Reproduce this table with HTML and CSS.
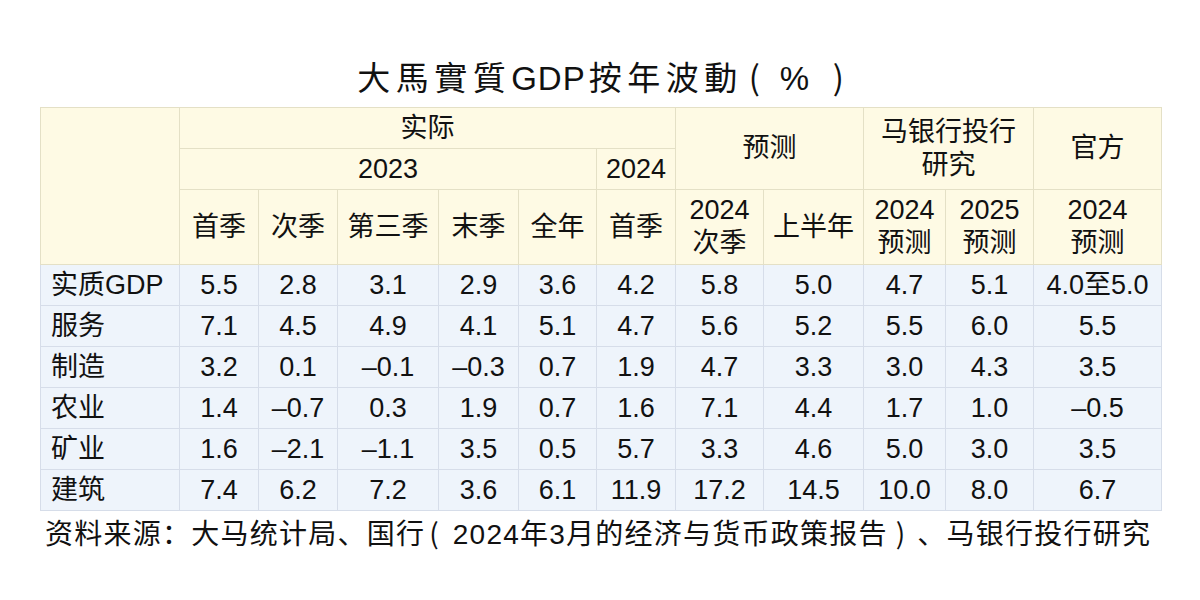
FILE: index.html
```html
<!DOCTYPE html>
<html lang="zh">
<head>
<meta charset="utf-8">
<link rel="stylesheet" href="styles.css">
</head>
<body>
<div class="page">
  <h1 class="title">大馬實質<span class="latin">GDP</span>按年波動<span class="tlp">(</span>%<span class="trp">)</span></h1>
  <table class="gdp">
    <colgroup>
      <col style="width:139px"><col style="width:79px"><col style="width:79px"><col style="width:101px">
      <col style="width:80px"><col style="width:78px"><col style="width:79px"><col style="width:88px">
      <col style="width:100px"><col style="width:82px"><col style="width:88px"><col style="width:128px">
    </colgroup>
    <thead>
      <tr class="h1">
        <th rowspan="3"></th>
        <th colspan="6">实际</th>
        <th colspan="2" rowspan="2">预测</th>
        <th colspan="2" rowspan="2">马银行投行<br>研究</th>
        <th rowspan="2">官方</th>
      </tr>
      <tr class="h2">
        <th colspan="5">2023</th>
        <th>2024</th>
      </tr>
      <tr class="h3">
        <th>首季</th><th>次季</th><th>第三季</th><th>末季</th><th>全年</th><th>首季</th>
        <th>2024<br>次季</th><th>上半年</th>
        <th>2024<br>预测</th><th>2025<br>预测</th><th>2024<br>预测</th>
      </tr>
    </thead>
    <tbody>
      <tr><td class="lbl">实质GDP</td><td>5.5</td><td>2.8</td><td>3.1</td><td>2.9</td><td>3.6</td><td>4.2</td><td>5.8</td><td>5.0</td><td>4.7</td><td>5.1</td><td>4.0至5.0</td></tr>
      <tr><td class="lbl">服务</td><td>7.1</td><td>4.5</td><td>4.9</td><td>4.1</td><td>5.1</td><td>4.7</td><td>5.6</td><td>5.2</td><td>5.5</td><td>6.0</td><td>5.5</td></tr>
      <tr><td class="lbl">制造</td><td>3.2</td><td>0.1</td><td>–0.1</td><td>–0.3</td><td>0.7</td><td>1.9</td><td>4.7</td><td>3.3</td><td>3.0</td><td>4.3</td><td>3.5</td></tr>
      <tr><td class="lbl">农业</td><td>1.4</td><td>–0.7</td><td>0.3</td><td>1.9</td><td>0.7</td><td>1.6</td><td>7.1</td><td>4.4</td><td>1.7</td><td>1.0</td><td>–0.5</td></tr>
      <tr><td class="lbl">矿业</td><td>1.6</td><td>–2.1</td><td>–1.1</td><td>3.5</td><td>0.5</td><td>5.7</td><td>3.3</td><td>4.6</td><td>5.0</td><td>3.0</td><td>3.5</td></tr>
      <tr><td class="lbl">建筑</td><td>7.4</td><td>6.2</td><td>7.2</td><td>3.6</td><td>6.1</td><td>11.9</td><td>17.2</td><td>14.5</td><td>10.0</td><td>8.0</td><td>6.7</td></tr>
    </tbody>
  </table>
  <p class="source">资料来源：大马统计局、国行<span class="flp">(</span>2024年3月的经济与货币政策报告<span class="frp">)</span>、马银行投行研究</p>
</div>
</body>
</html>
```

FILE: styles.css
```css
html, body {
  margin: 0;
  padding: 0;
  background: #ffffff;
}
body {
  font-family: "Liberation Sans", "Noto Sans CJK SC", sans-serif;
  color: #111111;
}
.page {
  width: 1121px;
  padding: 57px 0 0 40px;
}
.title {
  margin: 0;
  height: 50px;
  font-size: 33px;
  font-weight: normal;
  line-height: 38px;
  letter-spacing: 5.5px;
  text-align: center;
  white-space: nowrap;
  font-family: "Liberation Sans", "Noto Sans CJK TC", sans-serif;
}
.title .latin {
  letter-spacing: 1px;
  margin-right: 3px;
}
.tlp, .trp, .flp, .frp {
  font-family: "Noto Sans CJK SC", sans-serif;
  letter-spacing: 0;
}
.tlp {
  margin: 0 20px 0 6px;
}
.trp {
  margin: 0 0 0 18px;
}
.flp {
  margin: 0 14px 0 4px;
}
.frp {
  margin: 0 12px 0 8px;
}
.gdp {
  border-collapse: collapse;
  table-layout: fixed;
  width: 1121px;
  font-size: 27px;
}
.gdp th, .gdp td {
  padding: 0;
  text-align: center;
  font-weight: normal;
  line-height: 33px;
  white-space: nowrap;
}
.gdp th {
  background: #fefae4;
  border: 1px solid #e4e0c6;
}
.gdp td {
  background: #eef4fb;
  border: 1px solid #d6dde9;
  height: 40px;
}
.gdp td.lbl {
  text-align: left;
  padding-left: 10px;
}
.h1 th, .h2 th {
  height: 40px;
}
.h3 th {
  height: 74px;
}
.source {
  margin: 0;
  padding: 4px 0 0 5px;
  font-size: 28px;
  line-height: 34px;
  letter-spacing: 1.25px;
  white-space: nowrap;
}
```
